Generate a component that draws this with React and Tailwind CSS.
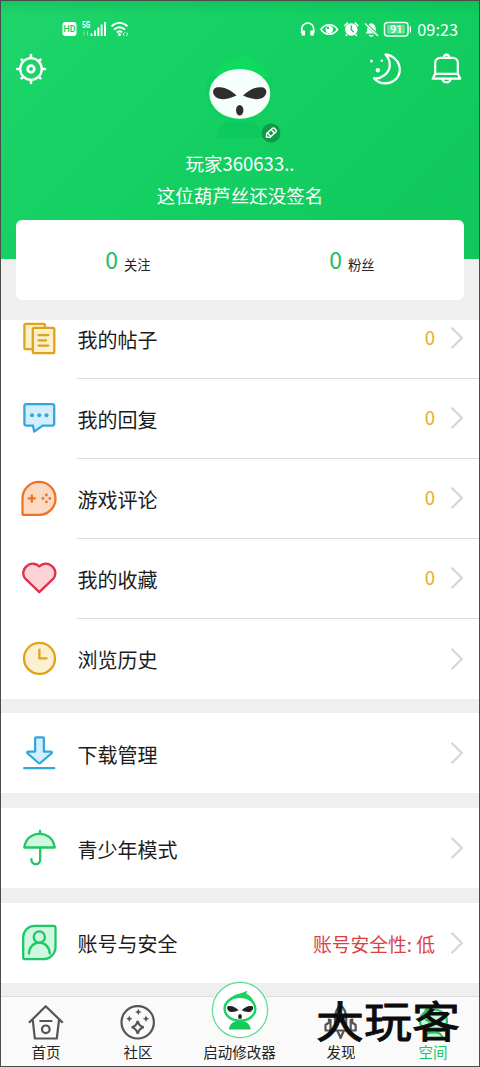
const menuGroups = [
  [
    { label: '我的帖子', icon: PostsIcon, count: '0' },
    { label: '我的回复', icon: ReplyIcon, count: '0' },
    { label: '游戏评论', icon: GameIcon, count: '0' },
    { label: '我的收藏', icon: HeartIcon, count: '0' },
    { label: '浏览历史', icon: ClockIcon },
  ],
  [{ label: '下载管理', icon: DownloadIcon }],
  [{ label: '青少年模式', icon: UmbrellaIcon }],
  [{ label: '账号与安全', icon: AccountIcon, note: '账号安全性: 低' }],
];

function RowIcon({ children, stroke, fill }) {
  return (
    <svg width="40" height="40" viewBox="0 0 40 40" fill={fill} stroke={stroke} strokeWidth="2.3" strokeLinecap="round" strokeLinejoin="round" className="shrink-0">
      {children}
    </svg>
  );
}

function PostsIcon() {
  return (
    <RowIcon stroke="#dea41c" fill="#fcf0cf">
      <rect x="5.4" y="4.8" width="20.5" height="25.4" rx="1.5" />
      <rect x="13.8" y="8.8" width="21.5" height="25.4" rx="1.5" />
      <path d="M19.5 16.2h9.8M19.5 21.4h7.5M19.5 26.6h9.8" />
    </RowIcon>
  );
}

function ReplyIcon() {
  return (
    <RowIcon stroke="#35a5dc" fill="#d3effb">
      <path d="M7.4 5.1h25.8a2 2 0 0 1 2 2v17.5a2 2 0 0 1-2 2H23.5L15.2 32.6L14 26.6H7.4a2 2 0 0 1-2-2V7.1a2 2 0 0 1 2-2z" />
      <g fill="#35a5dc" stroke="none">
        <circle cx="13" cy="16.3" r="2" />
        <circle cx="20.2" cy="16.3" r="2" />
        <circle cx="27.5" cy="16.3" r="2" />
      </g>
    </RowIcon>
  );
}

function GameIcon() {
  return (
    <RowIcon stroke="#ee7424" fill="#fcd9c2">
      <path d="M20 2.9a16.5 16.5 0 0 1 0 33H4.9a1.4 1.4 0 0 1-1.4-1.4V19.4A16.5 16.5 0 0 1 20 2.9z" />
      <path d="M8.8 19.4h8M12.8 15.4v8" strokeLinecap="butt" />
      <g fill="#ee7424" stroke="none">
        <circle cx="27.4" cy="16" r="1.4" />
        <circle cx="27.4" cy="22.8" r="1.4" />
        <circle cx="24" cy="19.4" r="1.4" />
        <circle cx="30.8" cy="19.4" r="1.4" />
      </g>
    </RowIcon>
  );
}

function HeartIcon() {
  return (
    <RowIcon stroke="#dc3349" fill="#fdd3d8">
      <path d="M20.3 7.4C17.6 4.2 12 3.7 8 6.8C3.4 10.4 3 16.2 6.8 20.2L20.3 33.2L33.8 20.2C37.6 16.2 37.2 10.4 32.6 6.8C28.6 3.7 23 4.2 20.3 7.4z" />
    </RowIcon>
  );
}

function ClockIcon() {
  return (
    <RowIcon stroke="#dea41c" fill="#fcf0cf">
      <circle cx="20.5" cy="19.4" r="15.5" />
      <path d="M20.4 9.8v9.6h8" strokeLinecap="butt" strokeLinejoin="miter" />
    </RowIcon>
  );
}

function DownloadIcon() {
  return (
    <RowIcon stroke="#35a5dc" fill="#d3effb">
      <path d="M17.4 4.3h6.2a1.3 1.3 0 0 1 1.3 1.3v13h6.6c1.4 0 1.8 1 .8 1.9L21.3 30a1.2 1.2 0 0 1-1.7 0L8.7 20.5c-1-.9-.6-1.9.8-1.9h6.6v-13a1.3 1.3 0 0 1 1.3-1.3z" />
      <path d="M5.2 35.2h30" />
    </RowIcon>
  );
}

function UmbrellaIcon() {
  return (
    <RowIcon stroke="#1fc866" fill="#d0f7df">
      <path d="M5.3 19.5C6.5 11 12.5 5.8 20.5 5.8S34.5 11 35.7 19.5z" />
      <path d="M21 2.8v3M21.2 19.5v12.3c0 6-8.8 6-8.8-.6" fill="none" />
    </RowIcon>
  );
}

function AccountIcon() {
  return (
    <RowIcon stroke="#1fc866" fill="#d0f7df">
      <path d="M15.5 2.9h19a2 2 0 0 1 2 2v19A12.3 12.3 0 0 1 24.2 36.2h-18a2 2 0 0 1-2-2v-20A11.3 11.3 0 0 1 15.5 2.9z" />
      <circle cx="20.3" cy="14" r="5.6" />
      <path d="M10 30.5c.3-6.6 4.5-10.8 10.3-10.8s10 4.2 10.5 10.8" fill="none" />
    </RowIcon>
  );
}

function StatusBar() {
  return (
    <div className="flex h-5 items-center justify-between pl-[61px] pr-[21px] text-white">
      <svg width="66" height="16" viewBox="0 0 66 16" fill="none" stroke="currentColor">
        <rect x=".5" y="1" width="14" height="14" rx="3" fill="currentColor" stroke="none" />
        <text x="7.5" y="11.2" textAnchor="middle" fontSize="8.8" fontWeight="600" fontFamily="Roboto, sans-serif" fill="#18d066" stroke="none">HD</text>
        <text x="20" y="7" fontSize="8.5" fontWeight="700" fontFamily="Roboto, sans-serif" textLength="8" lengthAdjust="spacingAndGlyphs" fill="currentColor" stroke="none">5G</text>
        <path d="M22 10.500v4M25.500 10.500v4" strokeWidth="1" opacity=".5" />
        <path d="M29.500 12.500v2.500M33 9.500V15M36.300 6.500V15M39.600 3.500V15M43 1v14" strokeWidth="1.900" />
        <path d="M49.500 5.300c4.500-4.600 11.500-4.600 16 0M52 8.600c3.200-3.200 7.800-3.200 11 0M54.800 11.500c1.800-1.600 3.700-1.600 5.200-.2" strokeWidth="1.900" />
        <circle cx="57.500" cy="13.500" r="1.500" fill="currentColor" stroke="none" />
        <path d="M62.500 11.500L61 13.200l1.500 1.700M64.300 11.500l1.500 1.700l-1.500 1.700" strokeWidth="1" />
      </svg>
      <div className="flex items-center gap-[6px]">
        <svg width="112" height="18" viewBox="299.500 20 112 18" fill="none" stroke="currentColor">
          <path d="M302.200 33v-4a6 6 0 0 1 12 0v4" strokeWidth="1.700" />
          <path d="M303.800 30.500v5M312.600 30.500v5" strokeWidth="3.400" />
          <path d="M321.500 29.500c4-6.300 12.500-6.300 16.500 0c-4 6.300-12.500 6.300-16.500 0z" strokeWidth="1.500" />
          <circle cx="329.800" cy="29.500" r="3.700" fill="currentColor" stroke="none" />
          <circle cx="328.500" cy="28" r="1.300" fill="#15cf63" stroke="none" />
          <circle cx="351.800" cy="29.500" r="6.200" fill="currentColor" stroke="none" />
          <path d="M351.800 25.500v4.300l2.500 2.500" stroke="#15cf63" strokeWidth="1.400" />
          <path d="M344.800 26l3.500-3.300M358.800 26l-3.500-3.300M347.500 34.500l-1.300 1.500M356 34.500l1.300 1.500" strokeWidth="1.600" />
          <path d="M366 33.500c2-1.500 1.600-4 1.800-6c.3-2.500 1.800-4 4-4.300c2.500.3 4 2 4.200 4.300c.1 2-.1 4.500 1.800 6z" fill="currentColor" stroke="none" />
          <path d="M370 35.200c.8 1.300 2.800 1.300 3.600 0" strokeWidth="1.300" />
          <path d="M365.500 23l13 12.800" stroke="#15cf63" strokeWidth="3" />
          <path d="M365.500 23.500l13 12.500" strokeWidth="1.400" />
          <rect x="385" y="22.500" width="23.500" height="13.500" rx="3" strokeWidth="1.500" />
          <rect x="387.500" y="24.800" width="18" height="9" rx="1" fill="currentColor" opacity=".35" stroke="none" />
          <text x="396.700" y="33.200" textAnchor="middle" fontSize="11" fontFamily="Roboto, sans-serif" fontWeight="500" fill="currentColor" stroke="none">91</text>
          <path d="M411 26.500v6" strokeWidth="1.500" />
        </svg>
        <span className="text-[16.300px] leading-5">09:23</span>
      </div>
    </div>
  );
}

function GearIcon() {
  return (
    <svg width="32" height="32" viewBox="0 0 32 32" fill="none" stroke="white" strokeWidth="2.300" strokeLinecap="round">
      <circle cx="16" cy="16" r="10.800" />
      <circle cx="16" cy="16" r="3.300" strokeWidth="2.800" />
      <path d="M16 2v3M16 27v3M2 16h3M27 16h3M6.600 6.600l1.500 1.500M23.900 23.900l1.500 1.500M25.400 6.600l-1.500 1.500M8.100 23.900l-1.500 1.500" strokeWidth="2.600" />
    </svg>
  );
}

function MoonIcon() {
  return (
    <svg width="34" height="34" viewBox="0 0 34 34" fill="none" stroke="white" strokeWidth="2.300" strokeLinejoin="round">
      <path d="M16.500 2.500C23.500 3.200 30.800 9 30.800 17.500C30.800 25.500 24.300 31.300 16.500 31.300C11.500 31.300 7.500 29.300 5 26.200C10.500 27.700 20.800 22 20.800 13C20.800 8.500 19 5.200 16.500 2.500z" />
      <g fill="white" stroke="none">
        <circle cx="2.500" cy="9" r="1.500" />
        <circle cx="12.800" cy="8.700" r="1.200" />
        <circle cx="8.800" cy="18.300" r="2.200" />
      </g>
    </svg>
  );
}

function BellIcon() {
  return (
    <svg width="32" height="34" viewBox="0 0 32 34" fill="none" stroke="white" strokeWidth="2.200" strokeLinejoin="round">
      <path d="M5.200 21.500V10.800a5 5 0 0 1 5-5h12.600a5 5 0 0 1 5 5v10.700" />
      <path d="M5.200 21.800h22.600l2.500 4.900H2.600z" />
      <path d="M14 5.500c0-3.800 5-3.800 5 0M12.500 27c.5 4.500 7.500 4.500 8 0" />
    </svg>
  );
}

function Avatar() {
  return (
    <div className="relative h-[92px] w-[72px]">
      <svg width="72" height="92" viewBox="204 50 72 92">
        <path d="M217 138c0-10 8-17 16-19h14c8 2 15 9 15 19z" fill="#0cc75a" opacity=".7" />
        <ellipse cx="240" cy="91" rx="34.500" ry="31" fill="#10d05d" />
        <path d="M213 75C222 60 238 58 244 55.500C248 53.500 251 53 255 53.500C251.500 55 251 57 252 60C260 62 267 70 270 78z" fill="#0fd95e" />
        <ellipse cx="239.800" cy="93.800" rx="30.500" ry="24.900" fill="#f6fffa" />
        <path d="M236.500 95.500C230 89 223.500 86.800 217.500 87.200C213.200 87.800 212.300 91.500 213.800 94.500C216.500 100.500 226 100.500 236.500 95.500z" fill="#2f2d2e" />
        <path d="M243 95.500C249.500 89 256 86.800 262 87.200C266.200 87.800 267.200 91.500 265.700 94.500C263 100.500 253.500 100.500 243 95.500z" fill="#2f2d2e" />
        <ellipse cx="239.700" cy="110.200" rx="3.700" ry="5.200" fill="#2f2d2e" />
      </svg>
      <svg width="20" height="20" viewBox="0 0 20 20" className="absolute left-[57px] top-[73px]">
        <circle cx="10" cy="10" r="9.500" fill="#11984b" />
        <g transform="rotate(-42 10 10)" fill="none" stroke="white" strokeWidth="1.400" strokeLinejoin="round">
          <path d="M6.500 7.500h7.700a1.500 1.500 0 0 1 1.500 1.500v2a1.500 1.500 0 0 1-1.500 1.500H6.500L3.800 10z" />
          <path d="M7.500 7.500v5M12.500 7.500v5" />
        </g>
      </svg>
    </div>
  );
}

function Stat({ value, label }) {
  return (
    <div className="flex flex-1 items-baseline justify-center">
      <span className="relative -top-px text-[23px] leading-8 text-[#1cbf5d]">{value}</span>
      <span className="ml-1.5 text-[13.300px] text-[#222]">{label}</span>
    </div>
  );
}

function Header() {
  return (
    <div className="h-[319px] bg-[#efefef]">
      <div className="h-[257.500px] bg-[linear-gradient(135deg,#1ed56a,#13cf62_50%,#10c75b)]">
        <div className="bg-[linear-gradient(#00a04340,transparent_14px)] pt-[18px]">
          <StatusBar />
        </div>
        <div className="flex justify-between pl-[14px] pr-[17px]">
          <div className="flex w-24 pt-[13.500px]">
            <GearIcon />
          </div>
          <div className="pt-[11px]">
            <Avatar />
          </div>
          <div className="flex w-[93px] gap-[27px] pt-[12.500px]">
            <MoonIcon />
            <BellIcon />
          </div>
        </div>
        <div className="mt-[5px] text-center text-[18.500px] leading-8 text-white">
          <div>玩家360633..</div>
          <div>这位葫芦丝还没签名</div>
        </div>
        <div className="mx-[15px] mt-[9px] flex h-20 items-center rounded-md bg-white">
          <Stat value="0" label="关注" />
          <Stat value="0" label="粉丝" />
        </div>
      </div>
    </div>
  );
}

function MenuRow({ item, last }) {
  const Icon = item.icon;
  return (
    <div className="flex h-20 items-center bg-white pl-[18px]">
      <Icon />
      <div className={`ml-[18px] flex h-20 flex-1 items-center pr-[14px] ${last ? '' : 'border-b border-[#dcdcdc]'}`}>
        <span className="flex-1 pl-[.5px] pt-[3px] text-[20px] text-[#1c1c1c]">{item.label}</span>
        {item.count && <span className="text-[18.500px] text-[#dfb020]">{item.count}</span>}
        {item.note && <span className="pt-[2px] text-[18.800px] text-[#dc3f42]">{item.note}</span>}
        <svg width="16" height="24" viewBox="0 0 16 24" fill="none" stroke="#d6d6d6" strokeWidth="2.200" className="ml-[14px]">
          <path d="M2.500 1.800L12.800 12L2.500 22.200" />
        </svg>
      </div>
    </div>
  );
}

function HomeIcon() {
  return (
    <svg width="40" height="40" viewBox="0 0 40 40" fill="none" stroke="#555" strokeWidth="2.200" strokeLinejoin="round">
      <path d="M3 20.800L19.700 4.200L36.800 20.800M6.800 18l2 18.500h22l2.200-18.500M13.500 19h12.800" />
      <circle cx="19.800" cy="27.300" r="3.800" />
    </svg>
  );
}

function CommunityIcon() {
  return (
    <svg width="40" height="40" viewBox="0 0 40 40" fill="none" stroke="#555" strokeWidth="2.200">
      <circle cx="19.700" cy="20.300" r="16.200" />
      <path d="M19.700 19c1 4 2.500 5.500 6 6.300c-3.500.9-5 2.500-6 6.500c-1-4-2.500-5.600-6-6.500c3.500-.8 5-2.300 6-6.300z" />
      <g fill="#555" stroke="none">
        <path d="M20.300 6.800l1 2.200l2.200 1l-2.200 1l-1 2.200l-1-2.200l-2.200-1l2.200-1z" />
        <path d="M11.300 13.500l1 2.200l2.200 1l-2.200 1l-1 2.200l-1-2.200l-2.200-1l2.200-1z" />
        <path d="M28 13.500l1 2.200l2.200 1l-2.200 1l-1 2.200l-1-2.200l-2.200-1l2.200-1z" />
      </g>
    </svg>
  );
}

function RocketIcon() {
  return (
    <svg width="40" height="40" viewBox="0 0 40 40" fill="none" stroke="#555" strokeWidth="2.200" strokeLinejoin="round">
      <path d="M19.600 3.500c4 3 5.600 8 5.600 13v12H14v-12c0-5 1.600-10 5.600-13z" />
      <circle cx="19.600" cy="16.300" r="3" />
      <path d="M9.500 28.500H4.500V23l3.500-2.500v-4M9.500 28.500V17M29.700 28.500h5V23l-3.500-2.500v-4M29.700 28.500V17M9.500 28.500H14M25.200 28.500h4.500M16.500 29l3.100 7l3.100-7" />
    </svg>
  );
}

function SpaceIcon() {
  return (
    <svg width="40" height="40" viewBox="0 0 40 40" fill="#c5f6d8" stroke="#1fc866" strokeWidth="2.200">
      <path d="M11 37c1-5 4-7 9.500-7s8.500 2 9.500 7z" />
      <ellipse cx="20.500" cy="19" rx="13.500" ry="11.500" />
      <path d="M12 9c2-4 7-4 12-6" fill="none" />
      <path d="M12 17l5 3M29 17l-5 3" />
    </svg>
  );
}

function LaunchIcon() {
  return (
    <svg width="58" height="58" viewBox="0 0 58 58">
      <circle cx="29" cy="29" r="27.600" fill="white" stroke="#5bdc8d" strokeWidth="1.200" />
      <path d="M17.800 48.500c.8-5.500 4.700-9 11-9s10.200 3.500 11 9z" fill="#13c95b" />
      <path d="M16 22c2.500-6 8-8.500 13-9.500c3-.6 5.500-2.500 8-2.700c-1.500 1-2 2-1 3.500c4 1.500 6 5 7 9z" fill="#17d460" />
      <ellipse cx="29" cy="27.800" rx="15.400" ry="12" fill="white" stroke="#17d460" strokeWidth="2.400" />
      <path d="M27.600 29.300c-3-3.200-6.500-4.800-10-4.200c-2 .4-1.700 3-.4 4.300c2.200 2.200 6.200 1.900 10.400-.1zM30.700 29.300c3-3.200 6.500-4.800 10-4.200c2 .4 1.700 3 .4 4.300c-2.200 2.200-6.200 1.900-10.400-.1z" fill="#222" />
      <ellipse cx="29" cy="35.500" rx="1.900" ry="2.600" fill="#222" />
    </svg>
  );
}

function Tab({ label, children, active }) {
  return (
    <div className="flex w-[92px] flex-col items-center pt-[5px]">
      {children}
      <span className={`text-[14.500px] leading-5 ${active ? 'text-[#1fc866]' : 'text-[#222]'}`}>{label}</span>
    </div>
  );
}

function TabBar() {
  return (
    <div className="relative h-[70px] border-t border-[#dcdcdc] bg-[#fafafa]">
      <div className="-ml-px flex">
        <Tab label="首页"><HomeIcon /></Tab>
        <Tab label="社区"><CommunityIcon /></Tab>
        <div className="-mt-4 flex w-[111px] flex-col items-center">
          <LaunchIcon />
          <span className="mt-[3px] text-[14.500px] leading-5 text-[#222]">启动修改器</span>
        </div>
        <Tab label="发现"><RocketIcon /></Tab>
        <Tab label="空间" active><SpaceIcon /></Tab>
      </div>
      <span className="pointer-events-none absolute left-[315px] top-[2px] h-10 origin-center scale-y-90 whitespace-nowrap text-[48px] leading-[40px] text-[#0c0c0c] [-webkit-text-stroke:1px_#0c0c0c]">
        大玩客
      </span>
    </div>
  );
}

export default function App() {
  return (
    <div className="flex h-[1067px] w-[480px] flex-col overflow-hidden border border-[#4c4c4c] bg-[#efefef] font-['Noto_Sans_CJK_SC',sans-serif]">
      <Header />
      <div className="flex h-[676px] shrink-0 flex-col justify-end gap-[14.670px] overflow-hidden pb-[13.300px]">
        {menuGroups.map((group, i) => (
          <div key={i} className="shrink-0">
            {group.map((item, j) => (
              <MenuRow key={item.label} item={item} last={j === group.length - 1} />
            ))}
          </div>
        ))}
      </div>
      <TabBar />
    </div>
  );
}
